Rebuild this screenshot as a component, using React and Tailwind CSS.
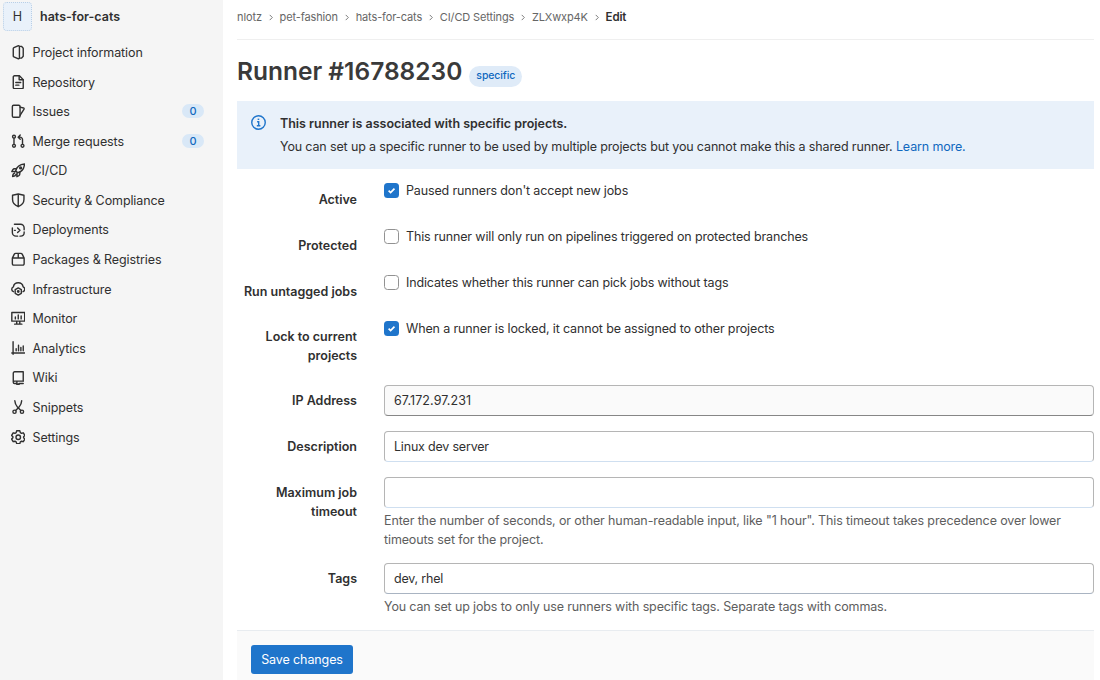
import React from "react";

const icons = {
  project: (
    <>
      <path d="M7.600.900 3.200 2.900a1.200 1.200 0 0 0-.7 1.100v8a1.200 1.200 0 0 0 .7 1.100l4.400 2a1.200 1.200 0 0 0 1.700-1.100V2a1.200 1.200 0 0 0-1.700-1.100Z" />
      <path d="M9.600 1.500h1.900l2 2v9l-2 2H9.600" />
    </>
  ),
  repository: (
    <>
      <path d="M9.3.9H3.8A1.3 1.3 0 0 0 2.5 2.2v11.6a1.3 1.3 0 0 0 1.3 1.3h8.4a1.3 1.3 0 0 0 1.3-1.3V5.1L9.3.9Z" />
      <path d="M9 1v4.3h4.3M5.3 8.3h5.4M5.3 11.2h3.4" />
    </>
  ),
  issues: (
    <>
      <path d="M2.900 1.300h5.700a1.400 1.400 0 0 1 1.400 1.400v10.600a1.400 1.400 0 0 1-1.400 1.400H2.900a1.400 1.400 0 0 1-1.400-1.400V2.700a1.400 1.400 0 0 1 1.400-1.400Z" />
      <path d="M10 3.400 13.800 4.400a.9.9 0 0 1 .6 1.200L10 12.600" />
    </>
  ),
  merge: (
    <>
      <circle cx="3.3" cy="3" r="1.6" />
      <circle cx="3.3" cy="13" r="1.6" />
      <circle cx="12.7" cy="13" r="1.6" />
      <path d="M3.3 4.6v6.8M12.7 11.4V6.2a2.700 2.700 0 0 0-2.700-2.700H8.200M10.200 1.200 7.900 3.500l2.300 2.300" />
    </>
  ),
  rocket: (
    <>
      <path d="M5.2 8.6C6.3 4.4 9.3 1.6 14.9 1.1c-.4 5.6-3.3 8.6-7.5 9.7L5.2 8.6Z" />
      <path d="M6 6.300H3.800a2 2 0 0 0-1.700 1L.9 9.500l4.300-.2M9.700 10v2.200a2 2 0 0 1-1 1.700l-2.200 1.200.2-4.300M4 11.100c-1.400.4-2.100 1.600-2.200 3.800 2.200-.1 3.300-.8 3.700-2.200" />
      <circle cx="10.6" cy="5.4" r="1" />
    </>
  ),
  shield: <path d="M8 1.100 1.700 2.500v4.800c0 3.400 2.500 6.300 6.300 7.800 3.800-1.500 6.300-4.400 6.300-7.800V2.500L8 1.100ZM8 1.100v14" />,
  deploy: (
    <>
      <path d="M3.800 1.400h6.700a4 4 0 0 1 4 4v2M1.500 5.600v4.900a4 4 0 0 0 4 4h1.800M14.500 10v.9a3.600 3.600 0 0 1-3.600 3.600h-1" />
      <path d="M7.300 5.500 9.900 8l-2.600 2.500M3.800 8.100h1" />
    </>
  ),
  pkg: (
    <path d="M1.500 6.700h13v6.400a1.400 1.400 0 0 1-1.400 1.400H2.900a1.400 1.400 0 0 1-1.400-1.400V6.700ZM1.500 6.700 3.500 2.600a2 2 0 0 1 1.800-1.100h5.400a2 2 0 0 1 1.800 1.100l2 4.100M8 1.500v5.200" />
  ),
  cloud: (
    <>
      <path d="M2.700 10.700A2.900 2.900 0 0 1 2.600 5.300 5.500 5.500 0 0 1 13.400 5.300a2.900 2.900 0 0 1-.1 5.400" />
      <path d="m8 6.500 3.400 2v4L8 14.500l-3.400-2v-4L8 6.500Z" />
      <circle cx="8" cy="10.500" r=".8" />
    </>
  ),
  monitor: (
    <path d="M.9 1.600h14.200v9.600H.9V1.600ZM4 14.500h8M6.300 11.500v2.700M9.700 11.500v2.700M4.800 6.500v2.200M8 4.300v4.400M11.200 5.600v3.100" />
  ),
  analytics: <path d="M2.300.9v13.700M.9 13.200h14.200M5.700 8.400v2.300M8.300 4.700v6M10.900 7v3.700M13.500 5.400v5.300" />,
  wiki: (
    <path d="M13.500 11.300V.9H4a1.500 1.500 0 0 0-1.500 1.500v9.900a1.500 1.500 0 0 0 1.500 1.500h1.500M2.500 12c.2-.5.700-.8 1.300-.8h9.700M6.500 12v3.200l1.200-.9 1.200.9V13.800h4.600" />
  ),
  snippets: (
    <>
      <circle cx="3.900" cy="13" r="1.800" />
      <circle cx="12.100" cy="13" r="1.800" />
      <path d="M4.200.9c0 3 1.400 5 3.100 7.200l3.600 3.600M11.800.9c0 3-1.400 5-3.100 7.200l-3.600 3.600" />
    </>
  ),
  settings: (
    <>
      <path d="M6.300.900h3.400l.6 2 1.300.7 2-.5 1.700 2.900-1.400 1.500v1l1.400 1.500-1.700 2.900-2-.5-1.300.7-.6 2H6.300l-.6-2-1.300-.7-2 .5L.700 10l1.400-1.500v-1L.700 6l1.700-2.900 2 .5 1.300-.7.600-2Z" />
      <circle cx="8" cy="8" r="2.500" />
    </>
  ),
};

function Icon({ name }) {
  return (
    <svg
      viewBox="0 0 16 16"
      className="size-[14.500px] shrink-0"
      fill="none"
      stroke="currentColor"
      strokeWidth="1.55"
      strokeLinejoin="round"
      strokeLinecap="round"
    >
      {icons[name]}
    </svg>
  );
}

const nav = [
  ["project", "Project information"],
  ["repository", "Repository"],
  ["issues", "Issues", 0],
  ["merge", "Merge requests", 0],
  ["rocket", "CI/CD"],
  ["shield", "Security & Compliance"],
  ["deploy", "Deployments"],
  ["pkg", "Packages & Registries"],
  ["cloud", "Infrastructure"],
  ["monitor", "Monitor"],
  ["analytics", "Analytics"],
  ["wiki", "Wiki"],
  ["snippets", "Snippets"],
  ["settings", "Settings"],
];

function Sidebar() {
  return (
    <aside className="w-[223px] shrink-0 bg-[#f5f5f5]">
      <div className="flex h-[37.500px] items-center pt-[1px] pb-[5px] pl-[3px]">
        <div className="flex size-[29px] items-center justify-center rounded-[4px] border border-dotted border-[#b9cfe6] bg-[#e9f1fa] pt-px text-[12.500px]">
          H
        </div>
        <div className="ml-[8px] pt-[2px] text-[12.500px] font-semibold">hats-for-cats</div>
      </div>
      <nav>
        {nav.map(([icon, label, count]) => (
          <a key={label} className="flex h-[29.600px] items-center pr-[19px] pl-[10.500px]">
            <Icon name={icon} />
            <span className="ml-[7.500px] flex-1 pt-[2px] text-[12.500px] tracking-[-0.100px]">{label}</span>
            {count !== undefined && (
              <span className="flex h-[14px] w-[22px] items-center justify-center rounded-full bg-[#d9e8f7] text-[11px] font-medium text-[#1068bf]">
                {count}
              </span>
            )}
          </a>
        ))}
      </nav>
    </aside>
  );
}

const crumbs = ["nlotz", "pet-fashion", "hats-for-cats", "CI/CD Settings", "ZLXwxp4K"];

function Breadcrumbs() {
  return (
    <div className="flex h-[40px] items-center border-b border-[#efefef] pb-[4px] text-[11px] tracking-[-0.120px] text-[#666]">
      {crumbs.map((c) => (
        <React.Fragment key={c}>
          <span>{c}</span>
          <svg viewBox="0 0 6 8" className="mr-[6px] ml-[5.700px] h-[7px] w-[6px]" fill="none" stroke="#777" strokeWidth="1.100">
            <path d="m1.500 1 3 3-3 3" />
          </svg>
        </React.Fragment>
      ))}
      <span className="text-[11.500px] font-semibold text-[#303030]">Edit</span>
    </div>
  );
}

function Row({ label, className, labelClass, children }) {
  return (
    <div className={"flex " + className}>
      <div className={"w-[120px] shrink-0 text-right text-[12.500px] leading-[19px] font-semibold " + labelClass}>
        {label}
      </div>
      <div className="ml-[27px] min-w-0 flex-1">{children}</div>
    </div>
  );
}

function Check({ checked, children }) {
  return (
    <label className="flex h-[15px] items-center text-[12.500px] tracking-[-0.140px]">
      {checked ? (
        <span className="flex size-[15px] items-center justify-center rounded-[3.500px] bg-[#1f75cb]">
          <svg viewBox="0 0 10 10" className="size-[9px]" fill="none" stroke="#fff" strokeWidth="1.900">
            <path d="m1.800 5.200 2.200 2.100 4.300-4.400" />
          </svg>
        </span>
      ) : (
        <span className="size-[15px] rounded-[3.500px] border border-[#929292] bg-white" />
      )}
      <span className="ml-[7px] pt-[2px] whitespace-nowrap">{children}</span>
    </label>
  );
}

function Field({ value, className }) {
  return (
    <div
      className={
        "flex h-[31px] items-center rounded-[4px] border border-[#b5b5b5] px-[9px] pt-[2px] text-[12.500px] " +
        className
      }
    >
      {value}
    </div>
  );
}

export default function App() {
  return (
    <div className="flex h-[680px] w-[1100px] overflow-hidden bg-white font-['Inter',sans-serif] text-[#303030]">
      <Sidebar />
      <main className="flex w-[871px] flex-col pl-[14px]">
        <Breadcrumbs />
        <div className="flex h-[61px] items-center">
          <h1 className="pt-[2px] text-[24.500px] font-semibold text-[#3a3a3a]">Runner #16788230</h1>
          <span className="mt-[11px] ml-[7px] flex h-[21px] w-[53px] items-center justify-center rounded-full bg-[#dfebf8] text-[10.500px] font-medium tracking-[-0.100px] text-[#1068bf]">
            specific
          </span>
        </div>
        <div className="flex h-[68px] bg-[#e9f1fa] pt-[12px] pl-[14px]">
          <svg viewBox="0 0 16 16" className="mt-[2px] size-[15px]" fill="none" stroke="#1f75cb" strokeWidth="1.500">
            <circle cx="8" cy="8" r="7.200" />
            <path d="M6.500 7.200H8.200v4M6.200 11.400h3.800" />
            <path d="M7.100 4.600h1.700" />
          </svg>
          <div className="ml-[14px] pt-px whitespace-nowrap">
            <div className="text-[12.500px] leading-[20px] font-semibold tracking-[-0.020px]">
              This runner is associated with specific projects.
            </div>
            <div className="mt-[3px] text-[12.500px] leading-[20px] tracking-[-0.140px]">
              You can set up a specific runner to be used by multiple projects but you cannot make this a shared
              runner. <a className="text-[#1068bf]">Learn more.</a>
            </div>
          </div>
        </div>
        <div className="h-[461px] pt-[14px]">
          <Row label="Active" className="h-[46px]" labelClass="pt-[7px]">
            <Check checked>Paused runners don't accept new jobs</Check>
          </Row>
          <Row label="Protected" className="h-[46px]" labelClass="pt-[7px]">
            <Check>This runner will only run on pipelines triggered on protected branches</Check>
          </Row>
          <Row label="Run untagged jobs" className="h-[46px]" labelClass="pt-[7px]">
            <Check>Indicates whether this runner can pick jobs without tags</Check>
          </Row>
          <Row label="Lock to current projects" className="h-[64px]" labelClass="pt-[6px]">
            <Check checked>When a runner is locked, it cannot be assigned to other projects</Check>
          </Row>
          <Row label="IP Address" className="h-[46px]" labelClass="pt-[6px]">
            <Field value="67.172.97.231" className="border-b-[#868686] bg-[#fafafa] tracking-[0.080px]" />
          </Row>
          <Row label="Description" className="h-[46px]" labelClass="pt-[6px]">
            <Field value="Linux dev server" className="border-b-[#cfdff0] tracking-[-0.200px]" />
          </Row>
          <Row label="Maximum job timeout" className="h-[86px]" labelClass="pt-[6px]">
            <Field className="border-b-[#cfdff0]" />
            <p className="mt-[4px] text-[12.500px] leading-[18.500px] tracking-[-0.120px] whitespace-nowrap text-[#5e5e5e]">
              Enter the number of seconds, or other human-readable input, like "1 hour". This timeout takes precedence
              over lower
              <br />
              timeouts set for the project.
            </p>
          </Row>
          <Row label="Tags" labelClass="pt-[6px]" className="">
            <Field value="dev, rhel" className="border-b-[#a9b4c2] tracking-[-0.200px]" />
            <p className="mt-[4px] text-[12.500px] leading-[18.500px] tracking-[-0.140px] whitespace-nowrap text-[#5e5e5e]">
              You can set up jobs to only use runners with specific tags. Separate tags with commas.
            </p>
          </Row>
        </div>
        <div className="h-[50px] border-t border-[#e8ecf0] bg-[#fafafa] pt-[14px] pl-[14px]">
          <button className="flex h-[29px] w-[102px] items-center justify-center rounded-[3px] bg-[#1f75cb] pt-[2px] text-[12.500px] tracking-[-0.100px] text-white">
            Save changes
          </button>
        </div>
      </main>
    </div>
  );
}
